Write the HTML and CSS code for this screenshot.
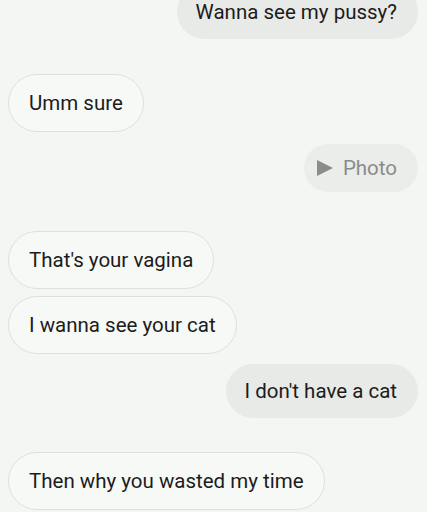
FILE: index.html
```html
<!DOCTYPE html>
<html>
<head>
<meta charset="utf-8">
<link rel="stylesheet" href="styles.css">
</head>
<body>
<div class="chat">
  <div class="msg sent first">Wanna see my pussy?</div>
  <div class="msg recv g35">Umm sure</div>
  <div class="msg sent photo g12"><span class="play"></span>Photo</div>
  <div class="msg recv g39">That's your vagina</div>
  <div class="msg recv g7">I wanna see your cat</div>
  <div class="msg sent g10">I don't have a cat</div>
  <div class="msg recv g34">Then why you wasted my time</div>
</div>
</body>
</html>
```
FILE: styles.css
```css
html, body {
  margin: 0;
  padding: 0;
  background: #f3f6f2;
  overflow: hidden;
  height: 512px;
}
.chat {
  display: flex;
  flex-direction: column;
  padding: 0 9px 0 8px;
  font-family: Roboto, "Noto Sans", sans-serif;
  font-size: 20.5px;
  line-height: 24px;
  color: #1c1c1c;
}
.msg {
  border-radius: 30px;
  white-space: nowrap;
}
.sent {
  align-self: flex-end;
  background: #e8eae7;
  padding: 15px 21px 15px 19px;
}
.recv {
  align-self: flex-start;
  background: #f7f9f6;
  border: 1px solid #dde0dc;
  padding: 16px 20px 16px 20px;
}
.first { margin-top: -15px; }
.photo {
  padding: 12px 21px 12px 13px;
  color: #8a8c8a;
  display: flex;
  align-items: center;
  background: #ebedea;
}
.play {
  width: 0;
  height: 0;
  border-top: 8px solid transparent;
  border-bottom: 8px solid transparent;
  border-left: 16px solid #8a8c8a;
  margin-right: 10px;
}
.g7 { margin-top: 7px; }
.g10 { margin-top: 10px; }
.g12 { margin-top: 12px; }
.g34 { margin-top: 34px; }
.g35 { margin-top: 35px; }
.g39 { margin-top: 39px; }
```
